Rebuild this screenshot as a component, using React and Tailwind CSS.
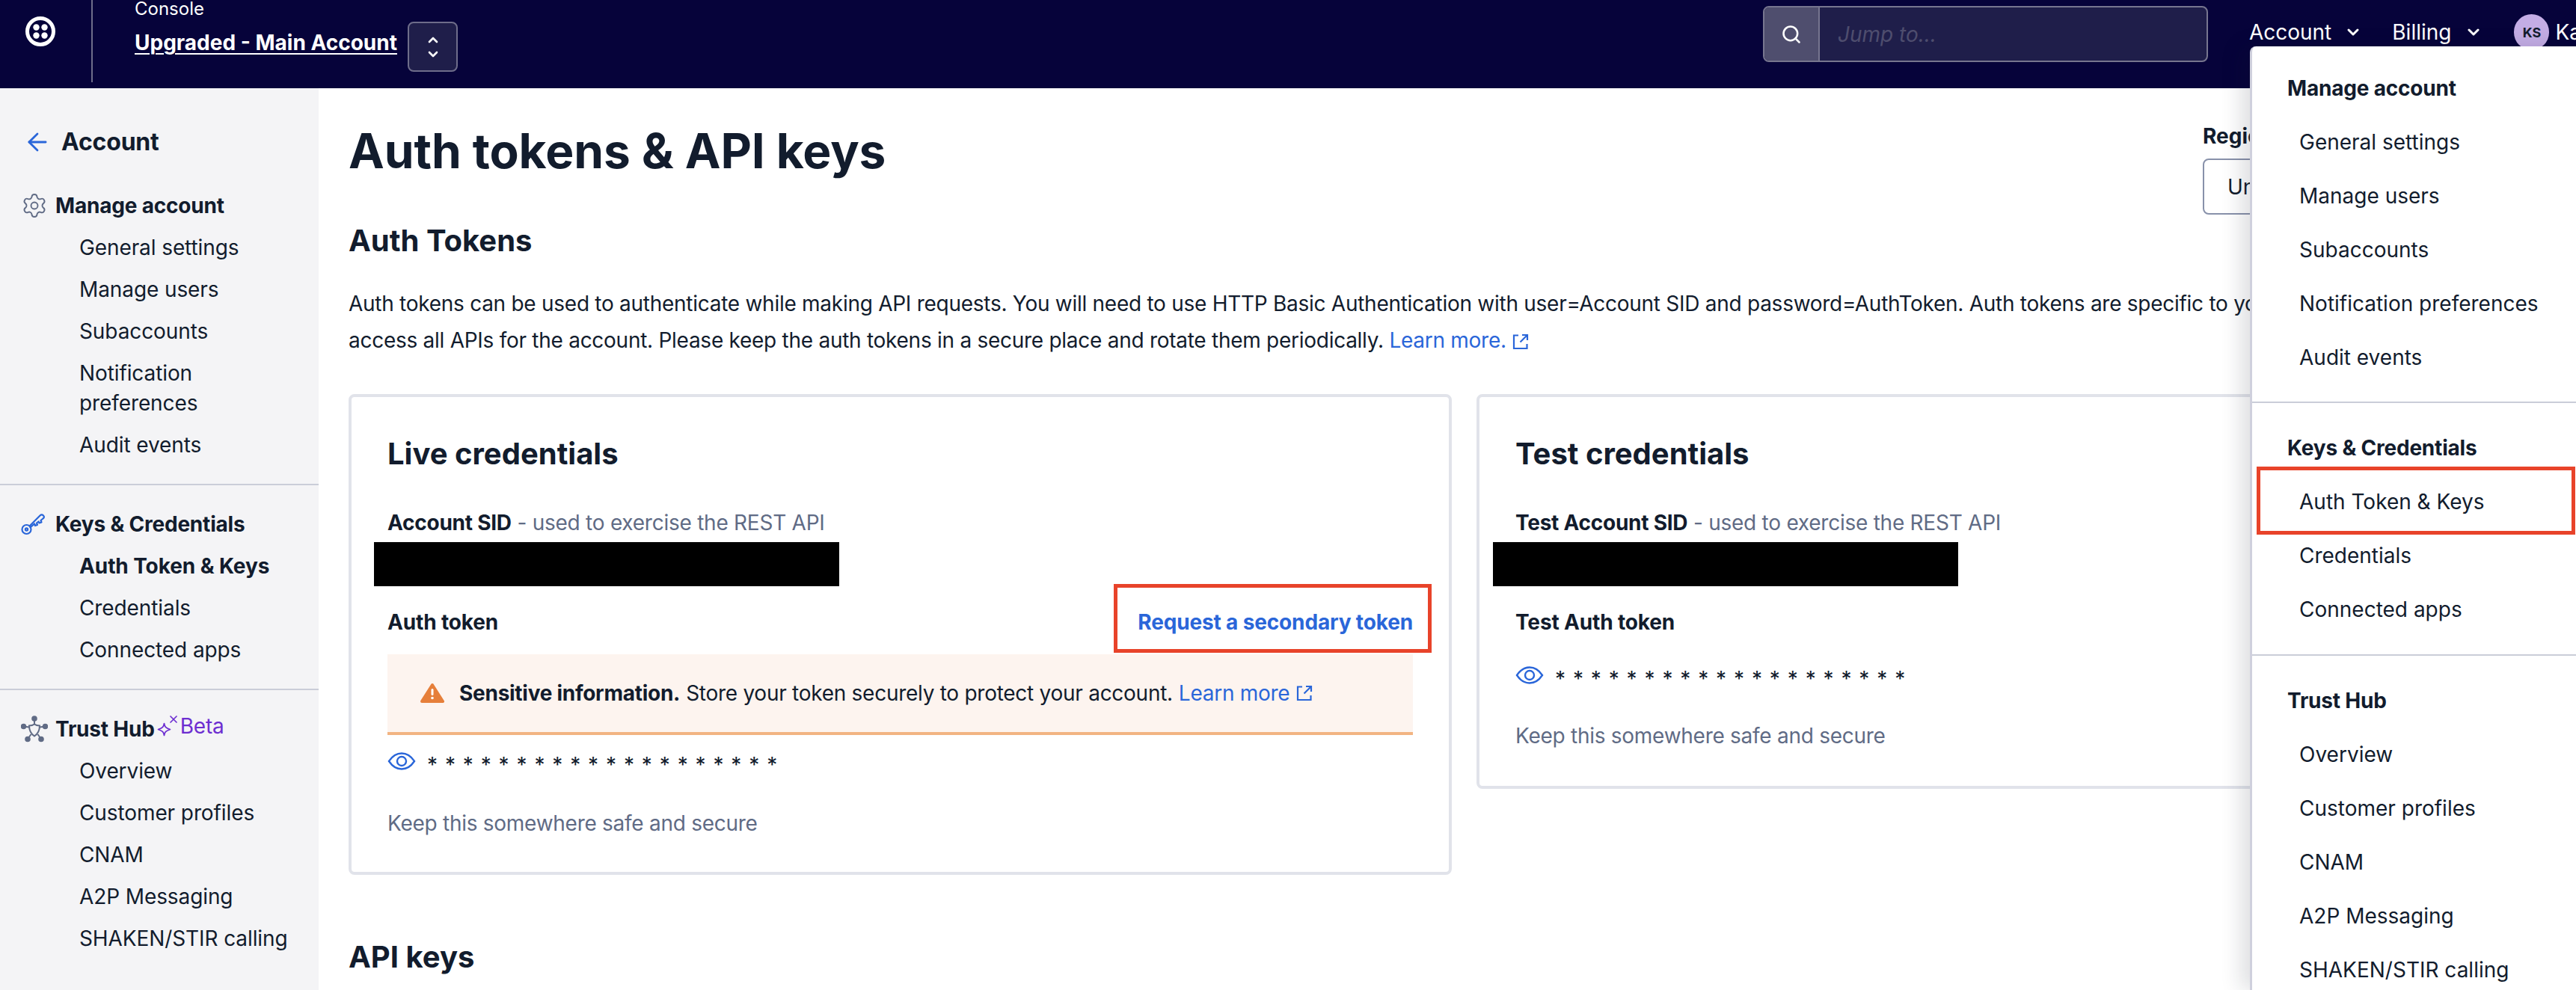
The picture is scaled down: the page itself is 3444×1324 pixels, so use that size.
import { ArrowLeft, Settings, Search, ChevronDown } from 'lucide-react';

const Logo = () => (
  <svg width="40" height="40" viewBox="0 0 40 40" fill="none">
    <circle cx="20" cy="20" r="17.5" stroke="white" strokeWidth="5" />
    <circle cx="14.5" cy="14.5" r="4.2" fill="white" />
    <circle cx="25.5" cy="14.5" r="4.2" fill="white" />
    <circle cx="14.5" cy="25.5" r="4.2" fill="white" />
    <circle cx="25.5" cy="25.5" r="4.2" fill="white" />
  </svg>
);

const UpDown = () => (
  <svg width="16" height="32" viewBox="0 0 16 32" fill="none" stroke="white" strokeWidth="2.6" strokeLinecap="round" strokeLinejoin="round">
    <path d="M3 9l5-5 5 5" />
    <path d="M3 23l5 5 5-5" />
  </svg>
);

const KeyIcon = () => (
  <svg width="34" height="30" viewBox="0 0 34 30" fill="none" stroke="#2a66d9" strokeWidth="2.2" strokeLinejoin="round" strokeLinecap="round">
    <circle cx="7.5" cy="22" r="6" />
    <circle cx="7.5" cy="22" r="1.6" />
    <path d="M11.5 17.500L25.500 3.500c1.500-1.500 3-1.500 4.500 0s1 3-.5 4l-3 2.500 1 2.500-3 1-1-2-2.500 2 1 2.500-3 1-1-2.500-5.500 5" />
  </svg>
);

const HubIcon = () => (
  <svg width="36" height="36" viewBox="0 0 36 36" fill="none" stroke="#606b85" strokeWidth="2">
    <path d="M11 13.500c3 0 5-.5 7-2 2 1.500 4 2 7 2 0 7-2.500 11-7 14-4.500-3-7-7-7-14z" />
    <path d="M18 4v7M3.500 14.500l7.500 1M32.500 14.500l-7.500 1M9 31.500l4.500-6.500M27 31.500l-4.500-6.500" />
    <circle cx="18" cy="4" r="2.800" fill="#606b85" />
    <circle cx="3.500" cy="14.500" r="2.800" fill="#606b85" />
    <circle cx="32.500" cy="14.500" r="2.800" fill="#606b85" />
    <circle cx="9" cy="31.500" r="2.800" fill="#606b85" />
    <circle cx="27" cy="31.500" r="2.800" fill="#606b85" />
  </svg>
);

const Sparkle = () => (
  <svg width="30" height="30" viewBox="0 0 30 30" fill="none" stroke="#6d2ed1" strokeWidth="1.7" strokeLinecap="round" strokeLinejoin="round">
    <path d="M9.500 11.500c.7 4.500 1.800 5.800 8 8-6.200 2.200-7.300 3.500-8 8-.7-4.500-1.800-5.800-8-8 6.200-2.200 7.300-3.500 8-8z" />
    <path d="M18 2l8 8M26 2l-8 8" />
  </svg>
);

const WarnIcon = () => (
  <svg width="32" height="28" viewBox="0 0 32 28">
    <path d="M16 3L30 25H2z" fill="#e67f3a" stroke="#e67f3a" strokeWidth="4" strokeLinejoin="round" />
    <rect x="14.500" y="8" width="3" height="9" rx="1.500" fill="white" />
    <circle cx="16" cy="20.500" r="1.800" fill="white" />
  </svg>
);

const EyeIcon = () => (
  <svg width="38" height="24" viewBox="0 0 38 24" fill="none" stroke="#2a66d9" strokeWidth="2.4">
    <path d="M2 12C7 4.500 13 1.500 19 1.500S31 4.500 36 12c-5 7.500-11 10.500-17 10.500S7 19.500 2 12z" />
    <circle cx="19" cy="12" r="6" />
  </svg>
);

const LinkOut = () => (
  <svg width="22" height="22" viewBox="0 0 22 22" fill="none" stroke="currentColor" strokeWidth="2.2" className="inline-block shrink-0">
    <path d="M8 2.500H2v17.500h17.500V14" />
    <path d="M13 2h7v7" />
    <path d="M20 2l-9.500 9.500" />
  </svg>
);

const MaskedToken = () => (
  <div className="flex items-center gap-[15px] h-[40px]">
    <EyeIcon />
    <span className="pt-[10px] text-[28px] leading-[40px] text-[#121c2d] tracking-[1px]">
      {'*'.repeat(20).split('').join(' ')}
    </span>
  </div>
);

const NavGroup = ({ icon, title, extra, items, active }) => (
  <div className="flex flex-col gap-4">
    <div className="flex items-center h-[40px] text-[28px] font-bold tracking-[-0.2px] text-[#121c2d]">
      <div className="w-[46px] ml-[28px] shrink-0 flex items-center">{icon}</div>
      <span>{title}</span>
      {extra}
    </div>
    {items.map((item) => (
      <div key={item} className={`pl-[106px] pr-[30px] text-[28px] leading-[40px] tracking-[-0.1px] text-[#121c2d] ${item === active ? 'font-bold' : ''}`}>
        {item}
      </div>
    ))}
  </div>
);

const MenuGroup = ({ title, items }) => (
  <div className="flex flex-col gap-8">
    <div className="pl-[47px] text-[28px] leading-[40px] font-bold tracking-[-0.2px] text-[#121c2d]">{title}</div>
    {items.map((item) => (
      <div key={item} className="pl-[63px] text-[28px] leading-[40px] text-[#121c2d]">{item}</div>
    ))}
  </div>
);

const manageItems = ['General settings', 'Manage users', 'Subaccounts', 'Notification preferences', 'Audit events'];
const keyItems = ['Auth Token & Keys', 'Credentials', 'Connected apps'];
const trustItems = ['Overview', 'Customer profiles', 'CNAM', 'A2P Messaging', 'SHAKEN/STIR calling'];

export default function App() {
  return (
    <div className="relative w-[3444px] h-[1324px] overflow-hidden bg-white [font-family:Inter,sans-serif] text-[#121c2d]">
      <header className="h-[118px] bg-[#06033a] flex text-white">
        <div className="w-[124px] h-[110px] border-r-2 border-[#6e6d8a] flex pl-[34px] pt-[22px] shrink-0">
          <Logo />
        </div>
        <div className="ml-[56px] flex flex-col">
          <div className="text-[24px] leading-[24px]">Console</div>
          <div className="flex items-start mt-[5px]">
            <span className="w-[351px] text-[28px] leading-[56px] font-bold whitespace-nowrap underline underline-offset-4 decoration-2">Upgraded - Main Account</span>
            <div className="ml-[14px] w-[67px] h-[67px] bg-[#1f1e4a] border-2 border-[#6e6d8a] rounded-lg flex items-center justify-center">
              <UpDown />
            </div>
          </div>
        </div>
        <div className="ml-auto -mr-[7px] flex items-start pt-[8px]">
          <div className="w-[595px] h-[75px] flex bg-[#1f1e4a] border-2 border-[#77768f] rounded-lg overflow-hidden">
            <div className="w-[74px] bg-[#4f4e6e] border-r-2 border-[#77768f] flex items-center justify-center">
              <Search size={28} strokeWidth={2.2} />
            </div>
            <div className="pl-[24px] flex items-center text-[28px] italic text-[#4e4d6e]">Jump to...</div>
          </div>
          <div className="ml-[55px] flex items-center h-[70px]">
            <span className="text-[28px]">Account</span>
            <ChevronDown size={24} strokeWidth={3} className="ml-[17px]" />
            <span className="ml-[40px] text-[28px]">Billing</span>
            <ChevronDown size={24} strokeWidth={3} className="ml-[18px]" />
            <div className="ml-[42px] w-[47px] h-[48px] rounded-full bg-[#c4ade5] text-[#121c2d] text-[18px] font-bold flex items-center justify-center shrink-0">KS</div>
            <span className="ml-[8px] text-[28px]">Ka</span>
          </div>
        </div>
      </header>

      <div className="flex h-[1206px]">
        <aside className="w-[426px] shrink-0 bg-[#f4f4f6] flex flex-col">
          <div className="mt-[52px] flex items-center h-[40px] pl-[31px] text-[32px] font-bold tracking-[-0.2px]">
            <ArrowLeft size={38} strokeWidth={1.75} className="text-[#2a66d9]" />
            <span className="ml-[13px]">Account</span>
          </div>
          <div className="mt-[45px] pb-[32px] border-b-2 border-[#cacdd8]">
            <NavGroup icon={<Settings size={36} strokeWidth={1.25} className="text-[#606b85]" />} title="Manage account" items={manageItems} />
          </div>
          <div className="pt-[32px] pb-[32px] border-b-2 border-[#cacdd8]">
            <NavGroup icon={<KeyIcon />} title="Keys & Credentials" items={keyItems} active="Auth Token & Keys" />
          </div>
          <div className="pt-[32px]">
            <NavGroup
              icon={<HubIcon />}
              title="Trust Hub"
              items={trustItems}
              extra={
                <span className="flex items-center ml-[3px] -mt-[8px] font-normal text-[#6d2ed1]">
                  <Sparkle />
                  <span className="ml-[1px]">Beta</span>
                </span>
              }
            />
          </div>
        </aside>

        <main className="flex-1 pl-[40px] pt-[48px] flex flex-col min-w-0">
          <h1 className="text-[64px] leading-[72px] font-bold tracking-[-0.1px]">Auth tokens &amp; API keys</h1>
          <h2 className="mt-[56px] text-[40px] leading-[56px] font-bold">Auth Tokens</h2>
          <p className="mt-[32px] text-[28px] leading-[49px] tracking-[-0.27px] whitespace-nowrap">
            Auth tokens can be used to authenticate while making API requests. You will need to use HTTP Basic Authentication with user=Account SID and password=AuthToken. Auth tokens are specific to your account and can be used to
            <br />
            access all APIs for the account. Please keep the auth tokens in a secure place and rotate them periodically.{' '}
            <span className="text-[#2a66d9]">
              Learn more.
              <span className="ml-[8px]"><LinkOut /></span>
            </span>
          </p>

          <div className="mt-[47px] flex items-start gap-[33px]">
            <section className="w-[1475px] shrink-0 border-4 border-[#e1e3ea] rounded-lg px-[48px] pt-[52px] pb-[45px]">
              <h3 className="text-[40px] leading-[48px] font-bold">Live credentials</h3>
              <div className="mt-[48px] text-[28px] leading-[40px] tracking-[-0.25px]">
                <span className="font-bold">Account SID</span>
                <span className="text-[#606b85]"> - used to exercise the REST API</span>
              </div>
              <div className="mt-[6px] -ml-[18px] w-[622px] h-[59px] bg-black" />
              <div className="mt-[28px] flex justify-between text-[28px] leading-[40px] font-bold tracking-[-0.15px]">
                <span>Auth token</span>
                <span className="text-[#2a66d9]">Request a secondary token</span>
              </div>
              <div className="mt-[23px] h-[108px] bg-[#fdf4ef] border-b-4 border-[#f2b482] flex items-center pl-[44px] text-[28px] tracking-[-0.27px]">
                <WarnIcon />
                <span className="ml-[20px] font-bold">Sensitive information.</span>
                <span className="ml-[8px]">Store your token securely to protect your account.</span>
                <span className="ml-[8px] text-[#2a66d9] flex items-center">
                  Learn more
                  <span className="ml-[9px] flex"><LinkOut /></span>
                </span>
              </div>
              <div className="mt-[15px]"><MaskedToken /></div>
              <div className="mt-[43px] text-[28px] leading-[40px] tracking-[-0.27px] text-[#606b85]">Keep this somewhere safe and secure</div>
            </section>

            <section className="w-[1475px] shrink-0 border-4 border-[#e1e3ea] rounded-lg px-[48px] pt-[52px] pb-[47px]">
              <h3 className="text-[40px] leading-[48px] font-bold">Test credentials</h3>
              <div className="mt-[48px] text-[28px] leading-[40px] tracking-[-0.25px]">
                <span className="font-bold">Test Account SID</span>
                <span className="text-[#606b85]"> - used to exercise the REST API</span>
              </div>
              <div className="mt-[6px] -ml-[30px] w-[622px] h-[59px] bg-black" />
              <div className="mt-[28px] text-[28px] leading-[40px] font-bold tracking-[-0.15px]">Test Auth token</div>
              <div className="mt-[31px]"><MaskedToken /></div>
              <div className="mt-[41px] text-[28px] leading-[40px] tracking-[-0.27px] text-[#606b85]">Keep this somewhere safe and secure</div>
            </section>
          </div>

          <h2 className="mt-[82px] text-[40px] leading-[56px] font-bold">API keys</h2>
        </main>
      </div>

      {/* region picker, mostly hidden by the open menu */}
      <div className="absolute left-[2945px] top-[162px] w-[300px]">
        <div className="text-[28px] leading-[40px] font-bold">Region</div>
        <div className="mt-[10px] h-[75px] border-2 border-[#8891aa] rounded-lg flex items-center pl-[31px] text-[28px]">United States (US1)</div>
      </div>

      {/* account menu */}
      <div className="absolute left-[3008px] top-[62px] right-0 bottom-0 bg-white border-l-[3px] border-[#cfd0dd] rounded-tl-lg shadow-[-12px_0_28px_rgba(18,28,45,0.14)] pt-[36px] flex flex-col">
        <div className="pb-[39px] border-b-2 border-[#cacdd8]">
          <MenuGroup title="Manage account" items={['General settings', 'Manage users', 'Subaccounts', 'Notification preferences', 'Audit events']} />
        </div>
        <div className="pt-[40px] pb-[40px] border-b-2 border-[#cacdd8]">
          <MenuGroup title="Keys & Credentials" items={keyItems} />
        </div>
        <div className="pt-[40px]">
          <MenuGroup title="Trust Hub" items={trustItems} />
        </div>
      </div>

      {/* annotation boxes */}
      <div className="absolute left-[1489px] top-[781px] w-[425px] h-[92px] border-[5px] border-[#e8432a]" />
      <div className="absolute left-[3017px] top-[624px] w-[426px] h-[91px] border-[5px] border-[#e8432a]" />
    </div>
  );
}
